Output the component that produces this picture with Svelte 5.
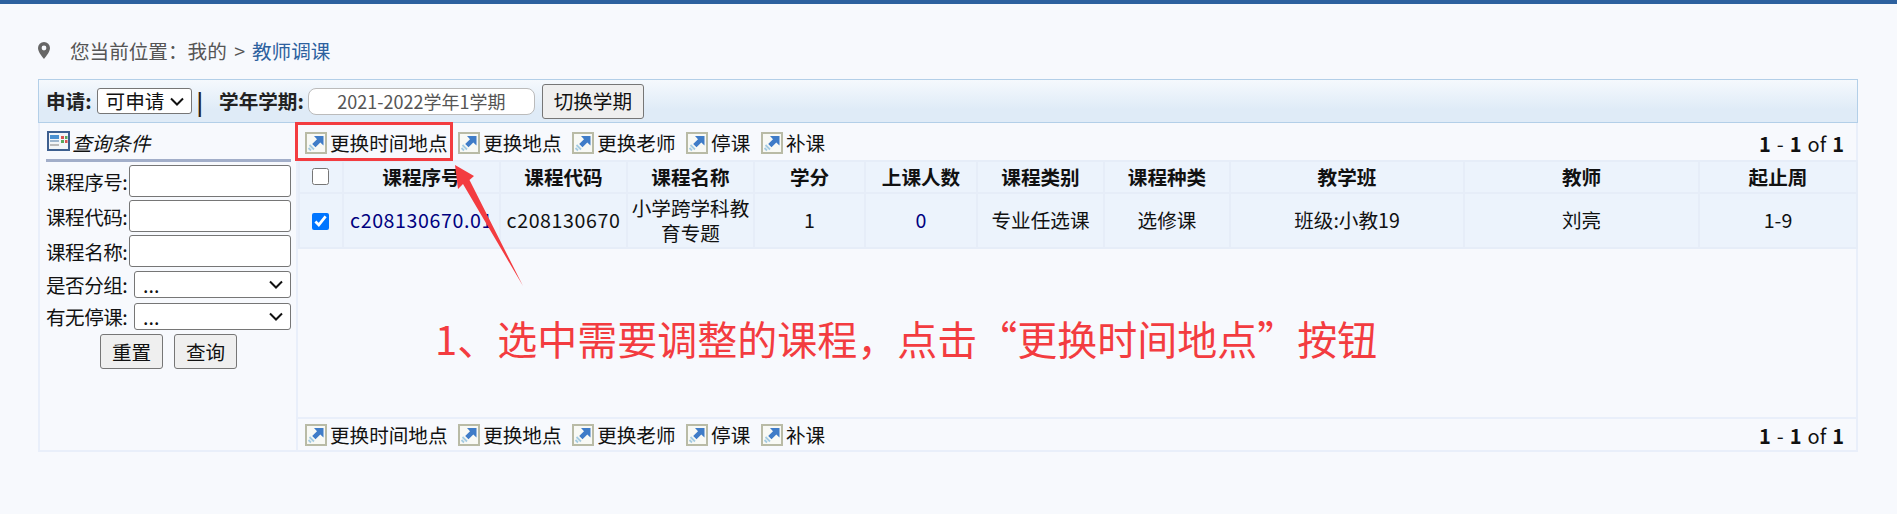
<script>
  const actions = ['更换时间地点', '更换地点', '更换老师', '停课', '补课'];
  const columns = [
    { title: '课程序号', width: 157 },
    { title: '课程代码', width: 127 },
    { title: '课程名称', width: 127 },
    { title: '学分', width: 111 },
    { title: '上课人数', width: 112 },
    { title: '课程类别', width: 127 },
    { title: '课程种类', width: 126 },
    { title: '教学班', width: 234 },
    { title: '教师', width: 235 },
    { title: '起止周', width: 158 }
  ];
  const row = [
    { text: 'c208130670.01', link: true, code: true },
    { text: 'c208130670', code: true },
    { text: '小学跨学科教育专题' },
    { text: '1' },
    { text: '0', link: true },
    { text: '专业任选课' },
    { text: '选修课' },
    { text: '班级:小教19' },
    { text: '刘亮' },
    { text: '1-9' }
  ];
</script>

{#snippet actionIcon()}
  <svg class="icon" width="22" height="22" viewBox="0 0 22 22">
    <rect x="1" y="1" width="20" height="20" fill="#f8f9f5" stroke="#b9bba6" stroke-width="2" />
    <path d="M9 4h9.500v9.500l-3.200-3-4.800 4.800-3.300-3.300 4.800-4.800z" fill="#3f7cc8" />
    <path d="M4.500 13l4.500 4.500M3.500 16l2.500 2.500" stroke="#a4cbe2" stroke-width="1.800" />
  </svg>
{/snippet}

{#snippet actionBar(extra)}
  <div class="actions {extra}">
    <div class="links">
      {#each actions as a}
        <span class="action">{@render actionIcon()}{a}</span>
      {/each}
    </div>
    <div class="pager"><b>1</b> - <b>1</b> of <b>1</b></div>
  </div>
{/snippet}

<div class="topbar"></div>

<div class="crumb">
  <svg class="pin" width="12" height="17" viewBox="0 0 12 17">
    <path fill-rule="evenodd" d="M6 0a6 6 0 0 1 6 6c0 3.500-3.500 8-6 11C3.500 14 0 9.500 0 6a6 6 0 0 1 6-6zm0 3.600a2.400 2.400 0 1 0 0 4.800 2.400 2.400 0 0 0 0-4.800z" fill="#666" />
  </svg>
  <span>您当前位置&#65306;</span><span class="me">我的 &gt;</span><a href="#top">教师调课</a>
</div>

<div class="frame">
  <div class="toolbar">
    <b class="apply">申请:</b>
    <select class="apply-select"><option>可申请</option></select>
    <b class="sep">|</b>
    <b class="term-label">学年学期:</b>
    <input class="term" value="2021-2022学年1学期" />
    <button class="switch">切换学期</button>
  </div>

  <div class="content">
    <aside class="side">
      <div class="side-title">
        <svg width="23" height="20" viewBox="0 0 23 20">
          <rect x="1" y="1" width="21" height="18" fill="#f2f5f8" stroke="#3d5f8f" stroke-width="2" />
          <rect x="3" y="4" width="9" height="4" fill="#4a90d0" />
          <rect x="3" y="9" width="9" height="2" fill="#9db6cf" />
          <rect x="3" y="13" width="9" height="2" fill="#bbb" />
          <rect x="14" y="5" width="3" height="3" fill="#d9534f" />
          <rect x="18" y="5" width="2.500" height="3" fill="#59a85c" />
          <rect x="14" y="9" width="3" height="3" fill="#59a85c" />
          <rect x="18" y="9" width="2.500" height="3" fill="#d9534f" />
        </svg>
        <em>查询条件</em>
      </div>
      <div class="field"><label for="f1">课程序号:</label><input id="f1" /></div>
      <div class="field"><label for="f2">课程代码:</label><input id="f2" /></div>
      <div class="field"><label for="f3">课程名称:</label><input id="f3" /></div>
      <div class="field pick"><label for="f4">是否分组:</label><select id="f4"><option>...</option></select></div>
      <div class="field pick"><label for="f5">有无停课:</label><select id="f5"><option>...</option></select></div>
      <div class="side-buttons">
        <button>重置</button>
        <button>查询</button>
      </div>
    </aside>

    <main class="main">
      {@render actionBar('top')}
      <table>
        <thead>
          <tr>
            <th class="check"><input type="checkbox" /></th>
            {#each columns as c}
              <th style="width: {c.width}px">{c.title}</th>
            {/each}
          </tr>
        </thead>
        <tbody>
          <tr>
            <td class="check"><input type="checkbox" checked /></td>
            {#each row as cell}
              <td class:link={cell.link} class:code={cell.code}>{cell.text}</td>
            {/each}
          </tr>
        </tbody>
      </table>
      <div class="spacer"></div>
      {@render actionBar('bottom')}
    </main>
  </div>
</div>

<!-- annotation drawn over the screenshot -->
<div class="redbox"></div>
<svg class="arrow" width="1897" height="514" viewBox="0 0 1897 514">
  <path d="M455 165L474 176L469.500 180L523 286L463 184L458 189z" fill="#f33c40" />
</svg>
<div class="note">1、选中需要调整的课程&#65292;点击“更换时间地点”按钮</div>

<style>
  :global(body) {
    background: #f7f9fd;
    font-family: "Noto Sans CJK SC", "Noto Sans", sans-serif;
    font-size: 19.6px;
    color: #111;
    overflow: hidden;
  }

  .topbar {
    height: 4px;
    background: #2d619f;
  }

  .crumb {
    height: 75px;
    padding: 17px 0 0 38px;
    display: flex;
    align-items: center;
    color: #555;
    box-sizing: border-box;
  }
  .pin { margin-right: 20px; }
  .me { margin-right: 7px; word-spacing: 3px; }
  .crumb a { color: #2d619f; text-decoration: none; }

  .frame {
    margin-left: 38px;
    width: 1820px;
  }

  .toolbar {
    height: 44px;
    box-sizing: border-box;
    border: 1px solid #b3cfe8;
    background: linear-gradient(#f5f9fd, #dfebf7 70%);
    display: flex;
    align-items: center;
    padding-left: 7px;
    line-height: 1;
  }
  .toolbar b { color: #222; }
  select {
    appearance: none;
    font: inherit;
    line-height: 1.2;
    color: #111;
    background-color: #fff;
    background-image: url("data:image/svg+xml,%3Csvg xmlns='http://www.w3.org/2000/svg' width='14' height='9'%3E%3Cpath d='M1 1.500l6 6 6-6' fill='none' stroke='%23111' stroke-width='2'/%3E%3C/svg%3E");
    background-repeat: no-repeat;
    background-position: right 7px center;
    border: 1px solid #767676;
    border-radius: 3px;
    padding: 0 8px;
  }
  .apply-select {
    width: 95px;
    height: 26px;
    margin-left: 5px;
  }
  .sep { margin-left: 5px; margin-right: 16px; font-size: 22px; }
  .term {
    width: 227px;
    height: 27px;
    box-sizing: border-box;
    margin-left: 4px;
    border: 1px solid #bbb;
    border-radius: 8px;
    background: #fff;
    font: inherit;
    font-size: 18px;
    color: #555;
    text-align: center;
    padding: 0;
  }
  .switch {
    width: 102px;
    height: 35px;
    margin-left: 7px;
  }
  button {
    font: inherit;
    color: #111;
    background: #efefef;
    border: 1px solid #767676;
    border-radius: 3px;
    padding: 0;
  }

  .content {
    display: flex;
    height: 329px;
    border-left: 2px solid #e9effa;
    border-right: 2px solid #e9effa;
    border-bottom: 2px solid #e9effa;
    box-sizing: border-box;
  }

  .side {
    width: 258px;
    flex: none;
    box-sizing: border-box;
    border-right: 2px solid #e9effa;
    padding: 0 5px 0 6px;
  }
  .side-title {
    display: flex;
    align-items: center;
    gap: 2px;
    height: 36px;
    border-bottom: 3px solid #a2aec9;
    padding-left: 1px;
  }
  .side-title em { font-style: italic; position: relative; top: 1px; }

  .field {
    display: flex;
    align-items: center;
    justify-content: space-between;
    margin-top: 3px;
    white-space: nowrap;
  }
  .field label { letter-spacing: -0.5px; }
  .field input {
    width: 162px;
    height: 32px;
    box-sizing: border-box;
    border: 1px solid #767676;
    border-radius: 3px;
    background: #fff;
    padding: 0;
  }
  .field.pick select {
    width: 157px;
    height: 27px;
    flex: none;
  }
  .side-buttons {
    display: flex;
    justify-content: center;
    gap: 11px;
    margin-top: 3px;
  }
  .side-buttons button { width: 63px; height: 35px; }

  .main {
    flex: 1;
    min-width: 0;
    display: flex;
    flex-direction: column;
  }

  .actions {
    flex: none;
    display: flex;
    align-items: center;
    justify-content: space-between;
    height: 37px;
    box-sizing: border-box;
    padding: 3px 12px 0 7px;
  }
  .actions.bottom {
    height: 33px;
    border-top: 2px solid #e9effa;
    padding-top: 1px;
  }
  .links { display: flex; gap: 10.600px; }
  .action { display: flex; align-items: center; gap: 3px; line-height: 1; }
  .pager { white-space: nowrap; font-size: 20px; word-spacing: 1.500px; }

  table {
    border-collapse: collapse;
    table-layout: fixed;
    width: 1558px;
    text-align: center;
  }
  th, td {
    box-sizing: border-box;
    background: #ecf3fc;
    border: 2px solid #e6edf8;
    padding: 0 0 2px;
    line-height: 25px;
  }
  th { height: 32px; font-weight: 700; color: #111; }
  td { height: 55px; }
  td.code { letter-spacing: 0.6px; }
  .check { width: 44px; }
  .check input { width: 17px; height: 17px; margin: 0; vertical-align: middle; }
  th.check input { position: relative; top: -3px; left: -1px; }
  td.check input { position: relative; top: -1px; left: -1px; }
  td.link { color: #000080; }

  .spacer { flex: 1; }

  .redbox {
    position: absolute;
    left: 295px;
    top: 122px;
    width: 158px;
    height: 39px;
    box-sizing: border-box;
    border: 3px solid #f33c40;
  }
  .arrow {
    position: absolute;
    left: 0;
    top: 0;
    pointer-events: none;
  }
  .note {
    position: absolute;
    left: 435px;
    top: 312px;
    font-size: 40px;
    line-height: 52px;
    color: #f33c40;
    white-space: nowrap;
  }
</style>
